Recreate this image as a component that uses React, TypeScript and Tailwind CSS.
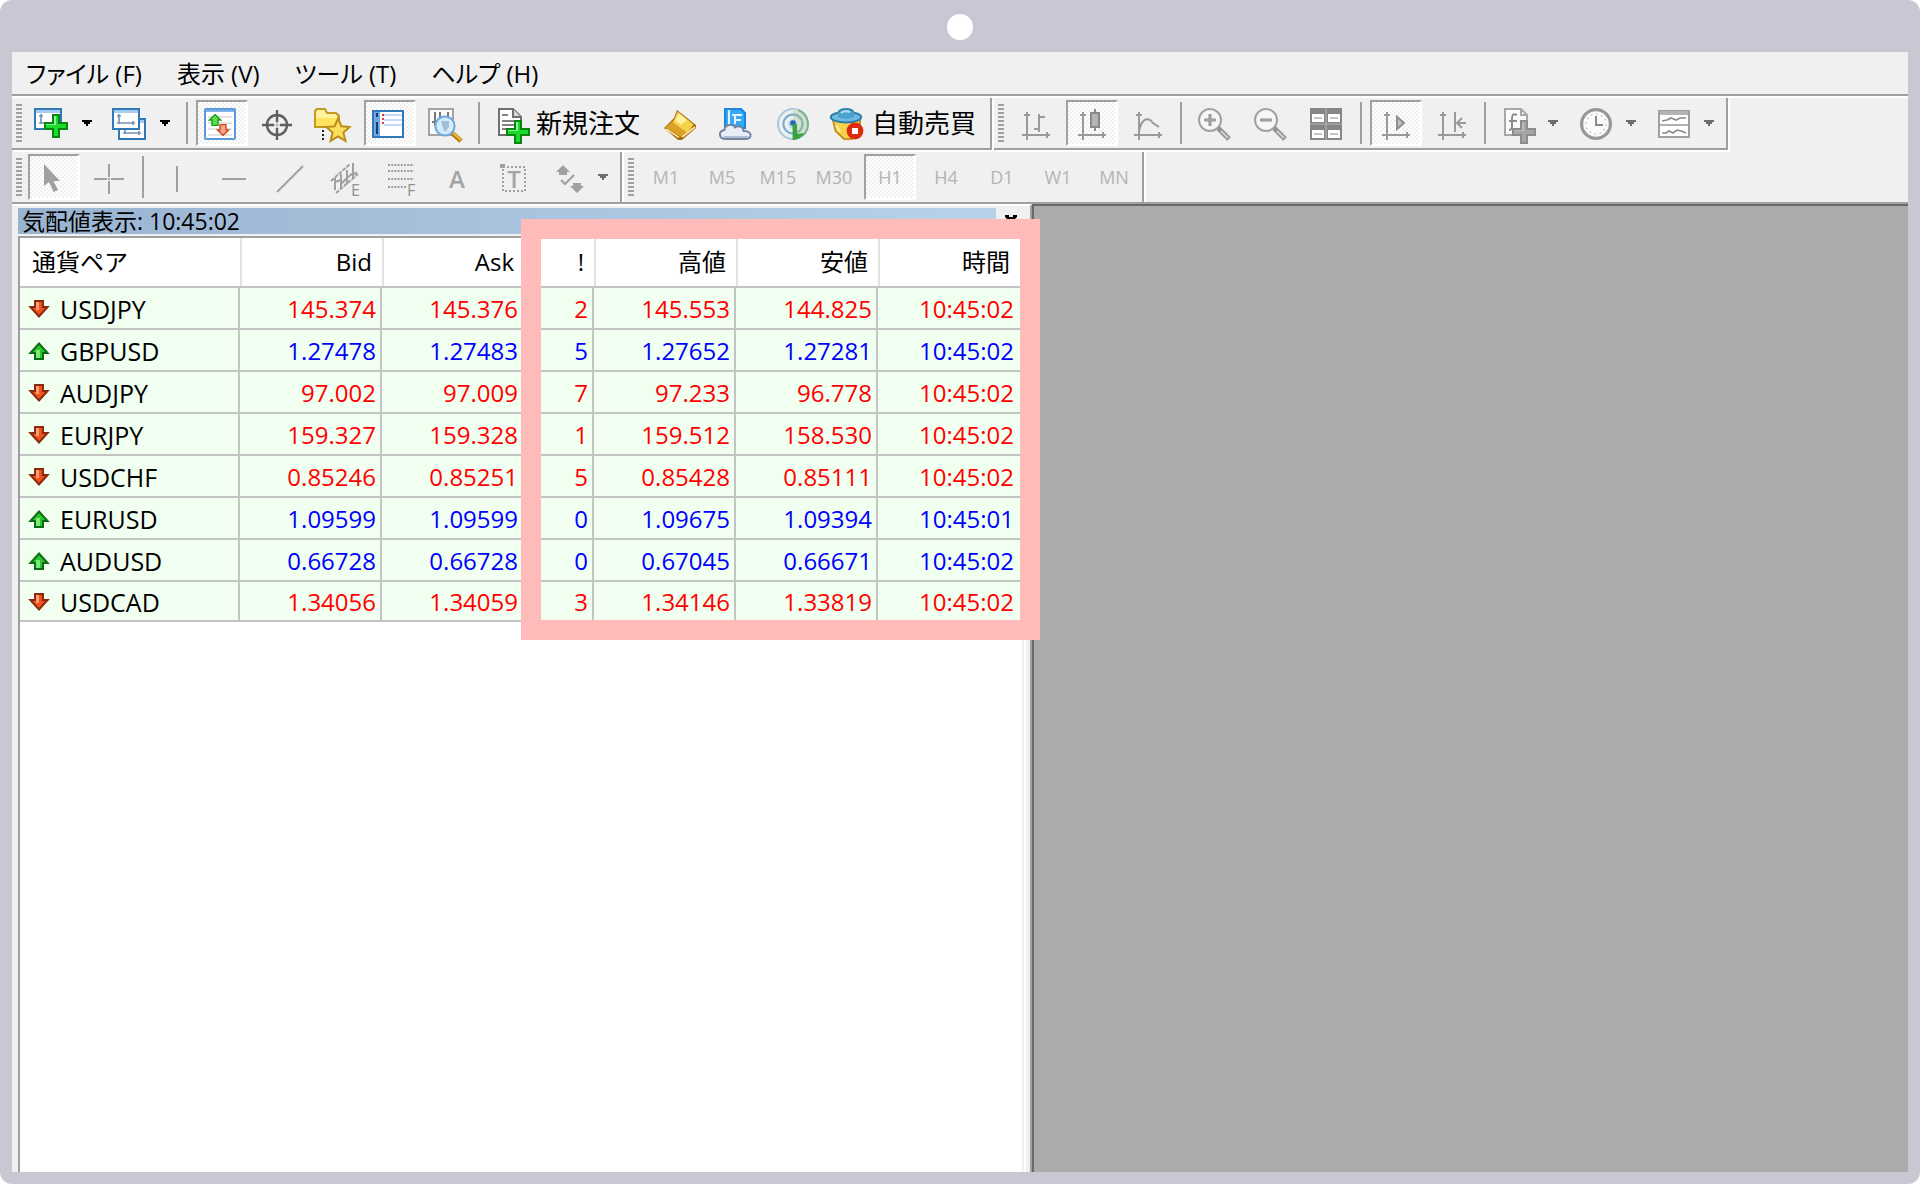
import type { ReactNode } from 'react'
import clsx from 'clsx'

interface Quote {
  symbol: string
  up: boolean
  bid: string
  ask: string
  spread: number
  high: string
  low: string
  time: string
}

const QUOTES: Quote[] = [
  { symbol: 'USDJPY', up: false, bid: '145.374', ask: '145.376', spread: 2, high: '145.553', low: '144.825', time: '10:45:02' },
  { symbol: 'GBPUSD', up: true,  bid: '1.27478', ask: '1.27483', spread: 5, high: '1.27652', low: '1.27281', time: '10:45:02' },
  { symbol: 'AUDJPY', up: false, bid: '97.002',  ask: '97.009',  spread: 7, high: '97.233',  low: '96.778',  time: '10:45:02' },
  { symbol: 'EURJPY', up: false, bid: '159.327', ask: '159.328', spread: 1, high: '159.512', low: '158.530', time: '10:45:02' },
  { symbol: 'USDCHF', up: false, bid: '0.85246', ask: '0.85251', spread: 5, high: '0.85428', low: '0.85111', time: '10:45:02' },
  { symbol: 'EURUSD', up: true,  bid: '1.09599', ask: '1.09599', spread: 0, high: '1.09675', low: '1.09394', time: '10:45:01' },
  { symbol: 'AUDUSD', up: true,  bid: '0.66728', ask: '0.66728', spread: 0, high: '0.67045', low: '0.66671', time: '10:45:02' },
  { symbol: 'USDCAD', up: false, bid: '1.34056', ask: '1.34059', spread: 3, high: '1.34146', low: '1.33819', time: '10:45:02' },
]

const MENUS = ['ファイル (F)', '表示 (V)', 'ツール (T)', 'ヘルプ (H)']
const HEADERS = ['Bid', 'Ask', '!', '高値', '安値', '時間']
const TIMEFRAMES = ['M1', 'M5', 'M15', 'M30', 'H1', 'H4', 'D1', 'W1', 'MN']

// All toolbar icons share one 18x21 grid, drawn at double size
function Icon({ children }: { children: ReactNode }) {
  return (
    <svg viewBox="0 0 18 21" className="h-[42px] w-9 shrink-0 overflow-visible" fill="none" aria-hidden="true">
      {children}
    </svg>
  )
}

function Plus({ x, y, gray }: { x: number; y: number; gray?: boolean }) {
  return (
    <g transform={`translate(${x} ${y})`}>
      <path d="M4 0h4v4h4v4H8v4H4V8H0V4h4z" fill={gray ? '#8c8c8c' : '#0b8413'} />
      <path d="M5 1h2v4h4v2H7v4H5V7H1V5h4z" fill={gray ? '#a6a6a6' : '#19db2b'} />
      <path d="M5 1h1v4.500H1V5h4z" fill={gray ? '#bababa' : '#8bf58f'} />
    </g>
  )
}

function ChartWindow({ x, y }: { x: number; y: number }) {
  return (
    <g transform={`translate(${x} ${y})`}>
      <rect x="0.500" y="0.500" width="13" height="10" fill="#fff" stroke="#2f78b9" />
      <rect x="1" y="1" width="12" height="1.500" fill="#a9cbef" />
      <path d="M3.500 3v5M2.500 4h2M2.500 7.500h9M10.500 6.500v2" stroke="#6f93b3" strokeWidth="0.8" />
    </g>
  )
}

// The pair of chart axes under every chart-mode icon
function Axes() {
  return (
    <path
      d="M4.500 5v14M3 6.500h3M2 16.500h14M14.500 15v3"
      stroke="#9a9a9a"
    />
  )
}

const icons = {
  newChart: (
    <Icon>
      <ChartWindow x={0} y={3} />
      <Plus x={5} y={6} />
    </Icon>
  ),
  profiles: (
    <Icon>
      <ChartWindow x={3} y={8} />
      <ChartWindow x={0} y={3} />
    </Icon>
  ),
  marketWatch: (
    <Icon>
      <rect x="0.500" y="3.500" width="15" height="15" rx="0.500" fill="#fff" stroke="#5b9bdc" />
      <path d="M1 4.500h14" stroke="#7fb3ea" />
      <path d="M2 7.500h12M2 10.500h12M2 13.500h12M2 16.500h12" stroke="#e4e4e4" />
      <path d="M5.500 6.300l2.800 2.700H7v2.700H4V9H2.700z" fill="#5ae04c" stroke="#1d9a1a" strokeWidth="0.7" />
      <path d="M9.500 16.700l2.800-2.700H11v-2.700H8V14H6.700z" fill="#f5a58a" stroke="#d9481a" strokeWidth="0.7" />
    </Icon>
  ),
  dataWindow: (
    <Icon>
      <circle cx="8.500" cy="11.500" r="5" stroke="#5e5e5e" strokeWidth="1.200" />
      <path d="M1 11.500h6M10 11.500h6M8.500 4v6M8.500 13v6" stroke="#5e5e5e" strokeWidth="1.200" />
      <path d="M7 11.500h3M8.500 10v3" stroke="#b5b5b5" strokeWidth="0.6" />
    </Icon>
  ),
  navigator: (
    <Icon>
      <path d="M-0.500 12.500v-8l1-1h4l1 2h4.500l1.500 1.500v5.500z" fill="#fff3a0" stroke="#c39a21" />
      <path d="M0 8h10v4H0z" fill="#ffe45c" />
      <path d="M3.500 14v6" stroke="#222" strokeDasharray="1 1" />
      <path d="M11 8.200l1.700 3.900 4.100.4-3.100 2.800 1 4.100-3.700-2.200-3.700 2.200 1-4.100-3.100-2.800 4.100-.4z" fill="#fbdf5c" stroke="#bd8c18" />
    </Icon>
  ),
  terminal: (
    <Icon>
      <rect x="0.500" y="4.500" width="15" height="13" fill="#fff" stroke="#2f78b9" />
      <rect x="1" y="5" width="3" height="12" fill="#6fa6dd" />
      <path d="M6 6.500h9M6 9h9M6 11.500h9" stroke="#c6d9fa" />
      <path d="M2.500 5.500v2M2.500 10v6" stroke="#173f6d" />
      <path d="M5.500 6v6" stroke="#e33" strokeDasharray="1 1" />
    </Icon>
  ),
  tester: (
    <Icon>
      <rect x="0.500" y="3.500" width="12" height="13" fill="#fafafa" stroke="#a3a3a3" />
      <path d="M3.500 5v7M2 10h2M6 5v3h4M10 5v3" stroke="#777" />
      <path d="M12 15.500l4.500 4" stroke="#b77d14" strokeWidth="2.400" />
      <path d="M12.500 15.500l4 3.500" stroke="#f2b63a" />
      <circle cx="8.500" cy="12" r="4.800" fill="#d3ebfb" stroke="#70a9dc" />
      <path d="M6.500 9.500h4v3l-2 2.500-1-2z" fill="#9fbdd4" />
    </Icon>
  ),
  newOrder: (
    <Icon>
      <path d="M1.500 3.500h7l4 4v9h-11z" fill="#fff" stroke="#6f6f6f" />
      <path d="M8.500 3.500v4h4" fill="#d8d8d8" stroke="#6f6f6f" />
      <path d="M3 6.500h3M3 9.500h7M3 11.500h6M3 13.500h4" stroke="#828282" />
      <Plus x={5} y={9} />
    </Icon>
  ),
  metaEditor: (
    <Icon>
      <path d="M1 13l5-5 1.500-4L17 11.500V13l-7 6H8z" fill="#a86a0c" />
      <path d="M1.700 12.700l5-4.500L15 13l-5.500 4.500z" fill="#d9a227" />
      <path d="M7.800 4.700l8 6.500-3.300 4-7-5z" fill="#f4d24a" />
      <path d="M8.500 5.800l4 3.200-3 2.500-2.800-2.200z" fill="#fff0a0" />
      <path d="M2 13.500l6.500 4.200M10 17.500l6.500-5" stroke="#fbe3a3" strokeWidth="0.8" />
    </Icon>
  ),
  vps: (
    <Icon>
      <path d="M3.500 3.500h8l2 2V13h-10z" fill="#35a9f5" stroke="#1887df" />
      <path d="M5.500 4v8M7 6.500h5M8.500 7v4M8.500 9h3" stroke="#e3f4ff" />
      <path
        d="M4 18.500c-3.800 0-4-4-.8-4.500.3-3 4.300-3.300 5.300-1.300 2-1.200 4.300-.1 4.300 1.800 4-.3 5 4 .7 4z"
        fill="#e8edf7"
        stroke="#74839f"
      />
      <path d="M3 17.500h12" stroke="#b1bdd2" />
    </Icon>
  ),
  signals: (
    <Icon>
      <circle cx="9.500" cy="11" r="7.500" fill="#eaf2ee" stroke="#a9c6e2" />
      <path d="M9.500 3.500a7.500 7.500 0 0 1 0 15z" fill="#cfe3cf" />
      <path d="M12 4a7.500 7.500 0 0 1 2 13" stroke="#7db488" />
      <circle cx="9.500" cy="11" r="4.800" stroke="#7aa7d3" />
      <path d="M9.500 6.200a4.800 4.800 0 0 1 0 9.600" stroke="#8fb8a8" />
      <circle cx="9.500" cy="11" r="2.400" fill="#b9d3ee" />
      <circle cx="9.500" cy="10.500" r="1.400" fill="#2465b8" />
      <path d="M9.300 11v8c2.500 0 4.500-1 5.700-3.500l-3.500.500V11z" fill="#39a43a" />
    </Icon>
  ),
  autoTrading: (
    <Icon>
      <path d="M1.500 9l1.300 5.500 4.200 4h4l4-5V9z" fill="#f7d24b" stroke="#c9921f" />
      <path d="M3 11.500l2 3.500" stroke="#fdedA0" />
      <ellipse cx="8" cy="7.600" rx="7.600" ry="2.600" fill="#6fbbe0" stroke="#2c7eaa" />
      <path d="M4 7.500V5c1-2.200 7-2.200 8 0v2.500c-2 1.200-6 1.200-8 0z" fill="#4aa3cf" />
      <path d="M4.200 5c1-2.200 6.600-2.200 7.600 0" stroke="#2c7eaa" strokeWidth="0.8" />
      <path d="M5.500 5.500c1-.8 3-1 4.500-.5" stroke="#b4e0f3" />
      <circle cx="12.500" cy="14.500" r="4.200" fill="#dd2b0c" />
      <rect x="11" y="13" width="3" height="3" fill="#fff" />
    </Icon>
  ),
  barChart: (
    <Icon>
      <Axes />
      <path d="M10.500 6v9M11 7.500h2.500M8 13.500h2.500" stroke="#9a9a9a" />
    </Icon>
  ),
  candles: (
    <Icon>
      <Axes />
      <path d="M10.500 3.500v11" stroke="#8a8a8a" />
      <rect x="8.500" y="5.500" width="4" height="7" fill="#b5b5b5" stroke="#8a8a8a" />
    </Icon>
  ),
  lineChart: (
    <Icon>
      <Axes />
      <path d="M4.500 14.500c1.500-7 5-7 7-4l3 2" stroke="#9a9a9a" />
    </Icon>
  ),
  zoomIn: (
    <Icon>
      <path d="M10 13l5.500 5.500" stroke="#929292" strokeWidth="2.600" />
      <path d="M11.500 14.500l3.500 3.500" stroke="#d0d0d0" />
      <circle cx="6" cy="9" r="5.500" fill="#f7f7f7" stroke="#a2a2a2" />
      <path d="M3 9h6M6 6v6" stroke="#a0a0a0" strokeWidth="1.600" />
    </Icon>
  ),
  zoomOut: (
    <Icon>
      <path d="M10 13l5.500 5.500" stroke="#929292" strokeWidth="2.600" />
      <path d="M11.500 14.500l3.500 3.500" stroke="#d0d0d0" />
      <circle cx="6" cy="9" r="5.500" fill="#f7f7f7" stroke="#a2a2a2" />
      <path d="M3 9h6" stroke="#a0a0a0" strokeWidth="1.600" />
    </Icon>
  ),
  tile: (
    <Icon>
      <path d="M0 3h16v16H0z" fill="#868686" />
      <path d="M8 3v16M0 11h16" stroke="#b4b4b4" strokeWidth="0.6" />
      <path d="M1 6h6v4H1zM9 6h6v4H9zM1 14h6v4H1zM9 14h6v4H9z" fill="#fff" />
      <path d="M2 8h4M10 8h4M2 16h4M10 16h4" stroke="#c9c9c9" />
    </Icon>
  ),
  autoScroll: (
    <Icon>
      <Axes />
      <path d="M9.500 7.500v6l3.500-3z" fill="#c2c2c2" stroke="#8f8f8f" />
    </Icon>
  ),
  chartShift: (
    <Icon>
      <Axes />
      <path d="M10.500 5v10M11.500 10.500H16M14 8l-2.500 2.500L14 13" stroke="#9a9a9a" />
    </Icon>
  ),
  indicators: (
    <Icon>
      <path d="M2.500 3.500h8l3 3v10h-11z" fill="#fbfbfb" stroke="#a8a8a8" />
      <path d="M10.500 3.500v3h3" stroke="#a8a8a8" />
      <path d="M8.500 6.500c-2-1-2.500 0-2.500 2v4c0 1-.5 1.500-1.500 1.500M4.500 9.500h4" stroke="#8d8d8d" />
      <Plus x={6} y={9} gray />
    </Icon>
  ),
  periods: (
    <Icon>
      <circle cx="9" cy="11" r="7.200" fill="#fafafa" stroke="#979797" strokeWidth="1.600" />
      <circle cx="9" cy="11" r="5" stroke="#cfcfcf" strokeDasharray="0.800 1.800" />
      <path d="M9 7v4.500h3.500" stroke="#8a8a8a" />
    </Icon>
  ),
  templates: (
    <Icon>
      <rect x="1.500" y="4.500" width="15" height="13" fill="#fff" stroke="#a0a0a0" />
      <path d="M2 5.500h14" stroke="#b4b4b4" strokeWidth="2" />
      <path d="M2 11.500h14" stroke="#b0b0b0" />
      <path d="M3 9.500l2.500-.5 2-1 2.500 1 2-1h3M3 15.500h2l1.500-1 2 1 2-1.500 2 .5 2.500 1" stroke="#8a8a8a" strokeWidth="0.8" />
    </Icon>
  ),
  cursor: (
    <Icon>
      <path d="M4 4v11l2.500-2 2.300 5 2.200-1-2.300-4.500H12z" fill="#a0a0a0" />
    </Icon>
  ),
  crosshair: (
    <Icon>
      <path d="M1 11.500h6.500M9.500 11.500H16M8.500 4v6.500M8.500 12.500V19M8 11.500h1" stroke="#a0a0a0" />
    </Icon>
  ),
  verticalLine: (
    <Icon>
      <path d="M8.500 5v13" stroke="#a0a0a0" />
    </Icon>
  ),
  horizontalLine: (
    <Icon>
      <path d="M3 11.500h12" stroke="#a0a0a0" />
    </Icon>
  ),
  trendLine: (
    <Icon>
      <path d="M2.500 18l13-13" stroke="#a0a0a0" />
    </Icon>
  ),
  channel: (
    <Icon>
      <path d="M1.500 12.500l9.500-8.500M4 18.500L15 9" stroke="#a0a0a0" strokeDasharray="2 0.600" />
      <path d="M3.500 11v6M3.500 13l3-1M6.500 9v7M6.500 14l3-3M9.500 7v7M9.500 11l3-2.500M12.500 3.500v8M12.500 9.500l2-1.500" stroke="#a0a0a0" />
      <text x="11.500" y="20" fontSize="8" fill="#8f8f8f">E</text>
    </Icon>
  ),
  fibonacci: (
    <Icon>
      <path d="M2 4.500h13M2 7.500h13M2 11.500h13M2 15.500h9" stroke="#a0a0a0" strokeDasharray="1 0.600" />
      <text x="11.500" y="20" fontSize="8" fill="#8f8f8f">F</text>
    </Icon>
  ),
  text: (
    <Icon>
      <text x="8.500" y="16" fontSize="12" fontWeight="600" textAnchor="middle" fill="#a4a4a4">A</text>
    </Icon>
  ),
  textLabel: (
    <Icon>
      <rect x="3.500" y="5.500" width="11" height="12" stroke="#a0a0a0" strokeDasharray="1 1" />
      <rect x="2" y="4" width="2.500" height="2" fill="#a0a0a0" />
      <text x="9" y="16" fontSize="12" fontWeight="600" textAnchor="middle" fill="#a4a4a4">T</text>
    </Icon>
  ),
  arrows: (
    <Icon>
      <path d="M6.500 4.500l3.500 3.500H8.500v1.500h-4V8H3zM13.500 18.500L10 15h1.500v-1.500h4V15H17z" fill="#a0a0a0" />
      <path d="M5.500 12l2 2 4.500-4.500" stroke="#a0a0a0" />
    </Icon>
  ),
}

interface ToolProps {
  label: string
  pressed?: boolean
  children: ReactNode
}

function Tool({ label, pressed, children }: ToolProps) {
  return (
    <button
      type="button"
      aria-label={label}
      aria-pressed={pressed}
      className={clsx(
        'flex h-[46px] w-[52px] shrink-0 items-center justify-center border-2 text-lg text-[#b4b4b4]',
        pressed
          ? 'border-t-[#a0a0a0] border-r-white border-b-white border-l-[#a0a0a0] bg-[repeating-conic-gradient(#ffffff_0_25%,#f0f0f0_0_50%)] bg-[length:4px_4px]'
          : 'border-transparent'
      )}
    >
      {children}
    </button>
  )
}

function DropTool({ label, dim, children }: { label: string; dim?: boolean; children: ReactNode }) {
  return (
    <button type="button" aria-label={label} className="flex h-[46px] w-[74px] shrink-0 items-center gap-3 pl-1.5">
      {children}
      <svg viewBox="0 0 5 3" className="h-1.5 w-2.5" aria-hidden="true">
        <path d="M0 0h5v1H4v1H3v1H2V2H1V1H0z" fill={dim ? '#6d6d6d' : '#000'} />
      </svg>
    </button>
  )
}

function LabelTool({ label, wide, children }: { label: string; wide?: boolean; children: ReactNode }) {
  return (
    <button
      type="button"
      className={clsx(
        'flex h-[46px] shrink-0 items-center pl-2 text-[26px] whitespace-nowrap',
        wide ? 'w-[166px] gap-1.5' : 'w-[162px] gap-1'
      )}
    >
      {children}
      {label}
    </button>
  )
}

function Separator() {
  return <div className="mr-1 ml-0.5 h-[42px] w-0.5 shrink-0 bg-[#a0a0a0]" />
}

// One dockable strip: dotted grip on the left, etched edge on the right
function ToolGroup({ underline, children }: { underline?: boolean; children: ReactNode }) {
  return (
    <div
      className={clsx(
        'mr-0.5 flex items-center gap-1 border-r-2 border-[#a0a0a0] pr-0.5 pl-1',
        underline ? 'mb-0.5 h-[52px] border-b-2 shadow-[2px_2px_0_#ffffff]' : 'h-[50px] shadow-[2px_0_0_#ffffff]'
      )}
    >
      <div className="mr-0.5 h-[38px] w-1.5 shrink-0 bg-[repeating-linear-gradient(#a0a0a0_0_2px,transparent_2px_4px)]" />
      {children}
    </div>
  )
}

function Direction({ up }: { up: boolean }) {
  return (
    <svg viewBox="0 0 11 9" className={clsx('h-[18px] w-[22px] shrink-0', up && 'rotate-180')} aria-hidden="true">
      <path
        d="M3.500 .5h4v3h2.300L5.500 8.200 1.200 3.500h2.300z"
        fill={up ? '#2cc42c' : '#f0521e'}
        stroke={up ? '#0b6d10' : '#8a2a0a'}
      />
      <path d={up ? 'M7 1v4H5V1z' : 'M4 1v4h1.500V1z'} fill={up ? '#7be87b' : '#ff9d78'} />
    </svg>
  )
}

function MarketWatch() {
  return (
    <section className="relative flex w-[1020px] shrink-0 flex-col border-t-2 border-r-2 border-t-white border-r-[#a0a0a0] pt-0.5 pl-1.5">
      <div className="flex h-[26px] items-center pr-1">
        <h2 className="flex h-full flex-1 items-center bg-linear-to-r from-[#99b4d1] to-[#b9d1ea] pl-1 text-[23px]">
          気配値表示: 10:45:02
        </h2>
        <button type="button" aria-label="閉じる" className="flex w-[30px] justify-center">
          <svg viewBox="0 0 6 6" className="h-3 w-3" aria-hidden="true">
            <path d="M0 0h2v1h2V0h2v1L4 3l2 2v1H4L3 4 2 6H0V5l2-2-2-2z" fill="#000" />
          </svg>
        </button>
      </div>

      <div className="mt-0.5 mr-2 flex-1 border-t-2 border-l-2 border-[#a0a0a0] bg-white shadow-[2px_0_0_#f0f0f0,4px_0_0_#ffffff]">
        <table className="w-[1000px] table-fixed border-separate border-spacing-0 text-2xl leading-none">
          <thead>
            <tr className="h-12">
              <th className="w-[220px] pl-3 text-left font-normal">通貨ペア</th>
              {HEADERS.map((h) => (
                <th
                  key={h}
                  className={clsx('border-l-2 border-[#e2e2e2] pr-2.5 text-right font-normal', h === '!' ? 'w-[70px]' : 'w-[142px]')}
                >
                  {h}
                </th>
              ))}
            </tr>
          </thead>
          <tbody>
            {QUOTES.map((q) => (
              <tr key={q.symbol} className={clsx('h-[42px] bg-[#f0fff0] last:h-10', q.up ? 'text-[#0000ff]' : 'text-[#ff0000]')}>
                <td className="border-t-2 border-r-2 border-[#c3c3c3] pt-0.5 pl-2 text-[25px] text-black">
                  <span className="flex items-center gap-2.5">
                    <Direction up={q.up} />
                    {q.symbol}
                  </span>
                </td>
                {[q.bid, q.ask, q.spread, q.high, q.low, q.time].map((value, i) => (
                  <td key={i} className="border-t-2 border-r-2 border-[#c3c3c3] pt-0.5 pr-1 text-right last:border-r-0 last:pr-1.5">
                    {value}
                  </td>
                ))}
              </tr>
            ))}
          </tbody>
        </table>
        <div className="h-0.5 w-[1000px] bg-[#c3c3c3]" />
      </div>

      {/* Highlight over the optional columns */}
      <div className="pointer-events-none absolute top-[13px] left-[509px] z-10 h-[421px] w-[519px] border-20 border-[#ffbaba]" />
    </section>
  )
}

export default function App() {
  return (
    <div className="min-h-screen bg-white font-['Open_Sans','Noto_Sans_CJK_JP',sans-serif] text-black">
      <div className="flex min-h-screen flex-col rounded-xl bg-[#c8c7d3] px-3 pb-3">
        <div className="flex h-[52px] items-center justify-center pt-0.5">
          <span className="size-[26px] rounded-full bg-white" />
        </div>

        <main className="flex flex-1 flex-col overflow-hidden bg-[#f0f0f0]">
          {/* Menu bar */}
          <nav className="flex h-11 items-center border-b-2 border-[#a0a0a0] pt-0.5 pl-3.5 text-2xl leading-none [font-feature-settings:'palt']">
            {MENUS.map((m) => (
              <button key={m} type="button" className="mr-[35px] whitespace-nowrap">
                {m}
              </button>
            ))}
          </nav>

          {/* Standard and chart toolbars */}
          <div className="flex border-t-2 border-white">
            <ToolGroup underline>
              <DropTool label="新規チャート">{icons.newChart}</DropTool>
              <DropTool label="チャートの組表示">{icons.profiles}</DropTool>
              <Separator />
              <Tool label="気配値表示" pressed>{icons.marketWatch}</Tool>
              <Tool label="データウィンドウ">{icons.dataWindow}</Tool>
              <Tool label="ナビゲーター">{icons.navigator}</Tool>
              <Tool label="ターミナル" pressed>{icons.terminal}</Tool>
              <Tool label="ストラテジーテスター">{icons.tester}</Tool>
              <Separator />
              <LabelTool label="新規注文">{icons.newOrder}</LabelTool>
              <Tool label="メタエディター">{icons.metaEditor}</Tool>
              <Tool label="仮想ホスティング">{icons.vps}</Tool>
              <Tool label="シグナル">{icons.signals}</Tool>
              <LabelTool label="自動売買" wide>{icons.autoTrading}</LabelTool>
            </ToolGroup>
            <ToolGroup underline>
              <Tool label="バーチャート">{icons.barChart}</Tool>
              <Tool label="ローソク足" pressed>{icons.candles}</Tool>
              <Tool label="ラインチャート">{icons.lineChart}</Tool>
              <Separator />
              <Tool label="拡大">{icons.zoomIn}</Tool>
              <Tool label="縮小">{icons.zoomOut}</Tool>
              <Tool label="整列">{icons.tile}</Tool>
              <Separator />
              <Tool label="自動スクロール" pressed>{icons.autoScroll}</Tool>
              <Tool label="チャートシフト">{icons.chartShift}</Tool>
              <Separator />
              <DropTool label="インディケータ" dim>{icons.indicators}</DropTool>
              <DropTool label="時間足" dim>{icons.periods}</DropTool>
              <DropTool label="定型チャート" dim>{icons.templates}</DropTool>
            </ToolGroup>
          </div>

          {/* Line studies and timeframes */}
          <div className="flex border-b-2 border-[#a0a0a0]">
            <ToolGroup>
              <Tool label="カーソル" pressed>{icons.cursor}</Tool>
              <Tool label="十字カーソル">{icons.crosshair}</Tool>
              <Separator />
              <Tool label="垂直線">{icons.verticalLine}</Tool>
              <Tool label="水平線">{icons.horizontalLine}</Tool>
              <Tool label="トレンドライン">{icons.trendLine}</Tool>
              <Tool label="チャネル">{icons.channel}</Tool>
              <Tool label="フィボナッチ">{icons.fibonacci}</Tool>
              <Tool label="テキスト">{icons.text}</Tool>
              <Tool label="テキストラベル">{icons.textLabel}</Tool>
              <DropTool label="矢印" dim>{icons.arrows}</DropTool>
            </ToolGroup>
            <ToolGroup>
              {TIMEFRAMES.map((t) => (
                <Tool key={t} label={t} pressed={t === 'H1'}>
                  {t}
                </Tool>
              ))}
            </ToolGroup>
          </div>

          <div className="flex flex-1">
            <MarketWatch />
            <div className="flex-1 border-t-2 border-l-2 border-[#696969] bg-[#ababab]" />
          </div>
        </main>
      </div>
    </div>
  )
}
